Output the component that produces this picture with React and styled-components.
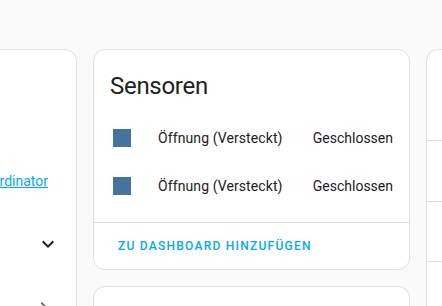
import React from 'react';
import styled, { createGlobalStyle } from 'styled-components';

const GlobalStyle = createGlobalStyle`
  html, body {
    margin: 0;
    padding: 0;
    background: #fafafa;
    overflow: hidden;
    font-family: Roboto, "Noto Sans", sans-serif;
    color: #212121;
  }
`;

// Layout

const Columns = styled.div`
  display: grid;
  grid-template-columns: repeat(3, 317px);
  column-gap: 16px;
  align-items: start;
  padding-top: 49px;
  margin-left: -240px;
  width: max-content;
`;

const Column = styled.div`
  display: flex;
  flex-direction: column;
  gap: 16px;
`;

const Card = styled.div`
  background: #fff;
  border: 1px solid #e0e0e0;
  border-radius: 12px;
  min-height: ${p => p.$minHeight || 0}px;
  overflow: hidden;
`;

// Device info card (left)

const Info = styled.div`
  padding: 121px 28px 29px 16px;
  font-size: 14px;
  line-height: 20px;
  text-align: right;
`;

const TextLink = styled.a`
  color: #03a9f4;
  text-decoration: underline;
  cursor: pointer;
`;

const Row = styled.div`
  display: flex;
  align-items: center;
  justify-content: flex-end;
  height: ${p => p.$height}px;
  padding: 0 ${p => p.$right}px 0 16px;
`;

const Chevron = styled.svg`
  width: 24px;
  height: 24px;
  fill: ${p => p.$color};
  flex: none;
`;

// Entities card (middle)

const CardHeader = styled.h1`
  margin: 0;
  padding: 12px 16px 0;
  font-size: 24px;
  font-weight: 400;
  line-height: 48px;
  letter-spacing: -0.012em;
  color: #212121;
`;

const CardContent = styled.div`
  display: flex;
  flex-direction: column;
  gap: 8px;
  padding: 8px 16px 16px;
`;

const EntityRow = styled.div`
  display: flex;
  align-items: center;
  height: 40px;
  font-size: 14px;
  line-height: 20px;
`;

const StateIcon = styled.div`
  width: 24px;
  height: 24px;
  display: flex;
  align-items: center;
  justify-content: center;
  flex: none;

  &::before {
    content: '';
    width: 18px;
    height: 18px;
    background: #44739e;
  }
`;

const EntityName = styled.div`
  flex: 1;
  margin-left: 24px;
  white-space: nowrap;
  letter-spacing: 0.1px;
`;

const EntityState = styled.div`
  margin-left: 16px;
  white-space: nowrap;
`;

const CardActions = styled.div`
  border-top: 1px solid #e0e0e0;
  padding: 5px 8px;
`;

const ActionButton = styled.button`
  height: 36px;
  padding: 0 16px;
  border: 0;
  background: none;
  color: #03a9f4;
  font-family: Roboto, sans-serif;
  font-size: 12px;
  font-weight: 500;
  letter-spacing: 1.25px;
  text-transform: uppercase;
  cursor: pointer;
`;

// Right card

const ListSection = styled.div`
  height: ${p => p.$height}px;
  & + & {
    border-top: 1px solid #e0e0e0;
  }
`;

const entities = [
  { name: 'Öffnung (Versteckt)', state: 'Geschlossen' },
  { name: 'Öffnung (Versteckt)', state: 'Geschlossen' },
];

const ChevronDown = () => (
  <Chevron viewBox="0 0 24 24" $color="#212121">
    <path d="M7.41,8.58L12,13.17L16.59,8.58L18,10L12,16L6,10L7.41,8.58Z" />
  </Chevron>
);

const ChevronRight = () => (
  <Chevron viewBox="0 0 24 24" $color="#727272">
    <path d="M8.59,16.58L13.17,12L8.59,7.41L10,6L16,12L10,18L8.59,16.58Z" />
  </Chevron>
);

export default function App() {
  return (
    <>
      <GlobalStyle />
      <Columns>
        <Column>
          <Card $minHeight={400}>
            <Info>
              <TextLink>Coordinator</TextLink>
            </Info>
            <Row $height={48} $right={16}>
              <ChevronDown />
            </Row>
            <Row $height={80} $right={20}>
              <ChevronRight />
            </Row>
          </Card>
        </Column>

        <Column>
          <Card>
            <CardHeader>Sensoren</CardHeader>
            <CardContent>
              {entities.map((e, i) => (
                <EntityRow key={i}>
                  <StateIcon />
                  <EntityName>{e.name}</EntityName>
                  <EntityState>{e.state}</EntityState>
                </EntityRow>
              ))}
            </CardContent>
            <CardActions>
              <ActionButton>Zu Dashboard hinzufügen</ActionButton>
            </CardActions>
          </Card>
          <Card $minHeight={120} />
        </Column>

        <Column>
          <Card $minHeight={300}>
            <ListSection $height={90} />
            <ListSection $height={60} />
            <ListSection $height={59} />
            <ListSection $height={80} />
          </Card>
        </Column>
      </Columns>
    </>
  );
}
